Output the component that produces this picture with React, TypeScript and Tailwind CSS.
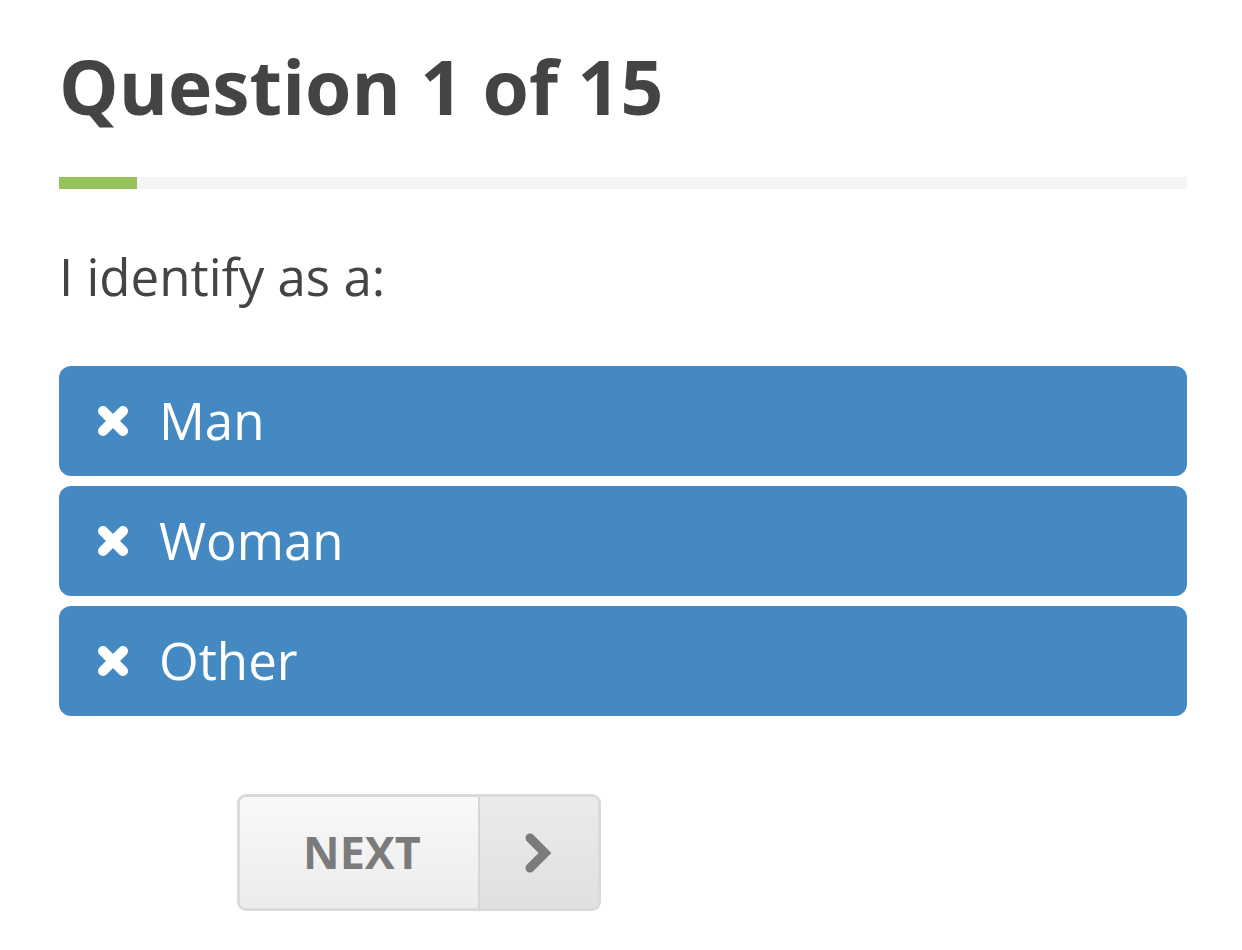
const options = ["Man", "Woman", "Other"];

function CrossIcon() {
  return (
    <svg width="32" height="32" viewBox="0 0 32 32" className="shrink-0">
      <path
        d="M6 6 L26 26 M26 6 L6 26"
        stroke="white"
        strokeWidth="10"
        strokeLinecap="round"
      />
    </svg>
  );
}

export default function App() {
  return (
    <main
      className="min-h-screen bg-white pl-[59px] pr-[55px] pt-[40px] text-[#444]"
      style={{ fontFamily: '"Open Sans", sans-serif' }}
    >
      <h1 className="text-[75px] font-bold leading-[92px] text-[#444]">Question 1 of 15</h1>

      <div className="mt-[45px] flex h-[12px] w-full bg-[#f5f5f5]">
        <div className="h-full w-[78px] bg-[#97c45a]" />
      </div>

      <p className="mt-[52px] text-[51px] leading-[70px] text-[#444]">I identify as a:</p>

      <div className="mt-[55px] flex flex-col gap-[10px]">
        {options.map((opt) => (
          <button
            key={opt}
            className="flex h-[110px] w-full items-center gap-[30px] rounded-[12px] bg-[#4589c3] pl-[38px] text-left text-[51px] text-white"
          >
            <CrossIcon />
            <span className="-mt-[2px]">{opt}</span>
          </button>
        ))}
      </div>

      <div className="ml-[178px] mt-[78px] flex h-[117px] w-[364px] overflow-hidden rounded-[9px] border-[3px] border-[#dadada]">
        <div className="flex flex-1 items-center justify-center bg-gradient-to-b from-[#f9f9f9] to-[#ececec] pb-[2px] pl-[6px] text-[45px] font-bold text-[#7b7b7b]">
          NEXT
        </div>
        <div className="flex w-[120px] items-center justify-center border-l-2 border-[#d6d6d6] bg-gradient-to-b from-[#ebebeb] to-[#e0e0e0]">
          <svg width="34" height="48" viewBox="0 0 34 48">
            <path
              d="M8 9 L23 24 L8 39"
              fill="none"
              stroke="#7b7b7b"
              strokeWidth="9"
              strokeLinecap="round"
              strokeLinejoin="miter"
            />
          </svg>
        </div>
      </div>
    </main>
  );
}
